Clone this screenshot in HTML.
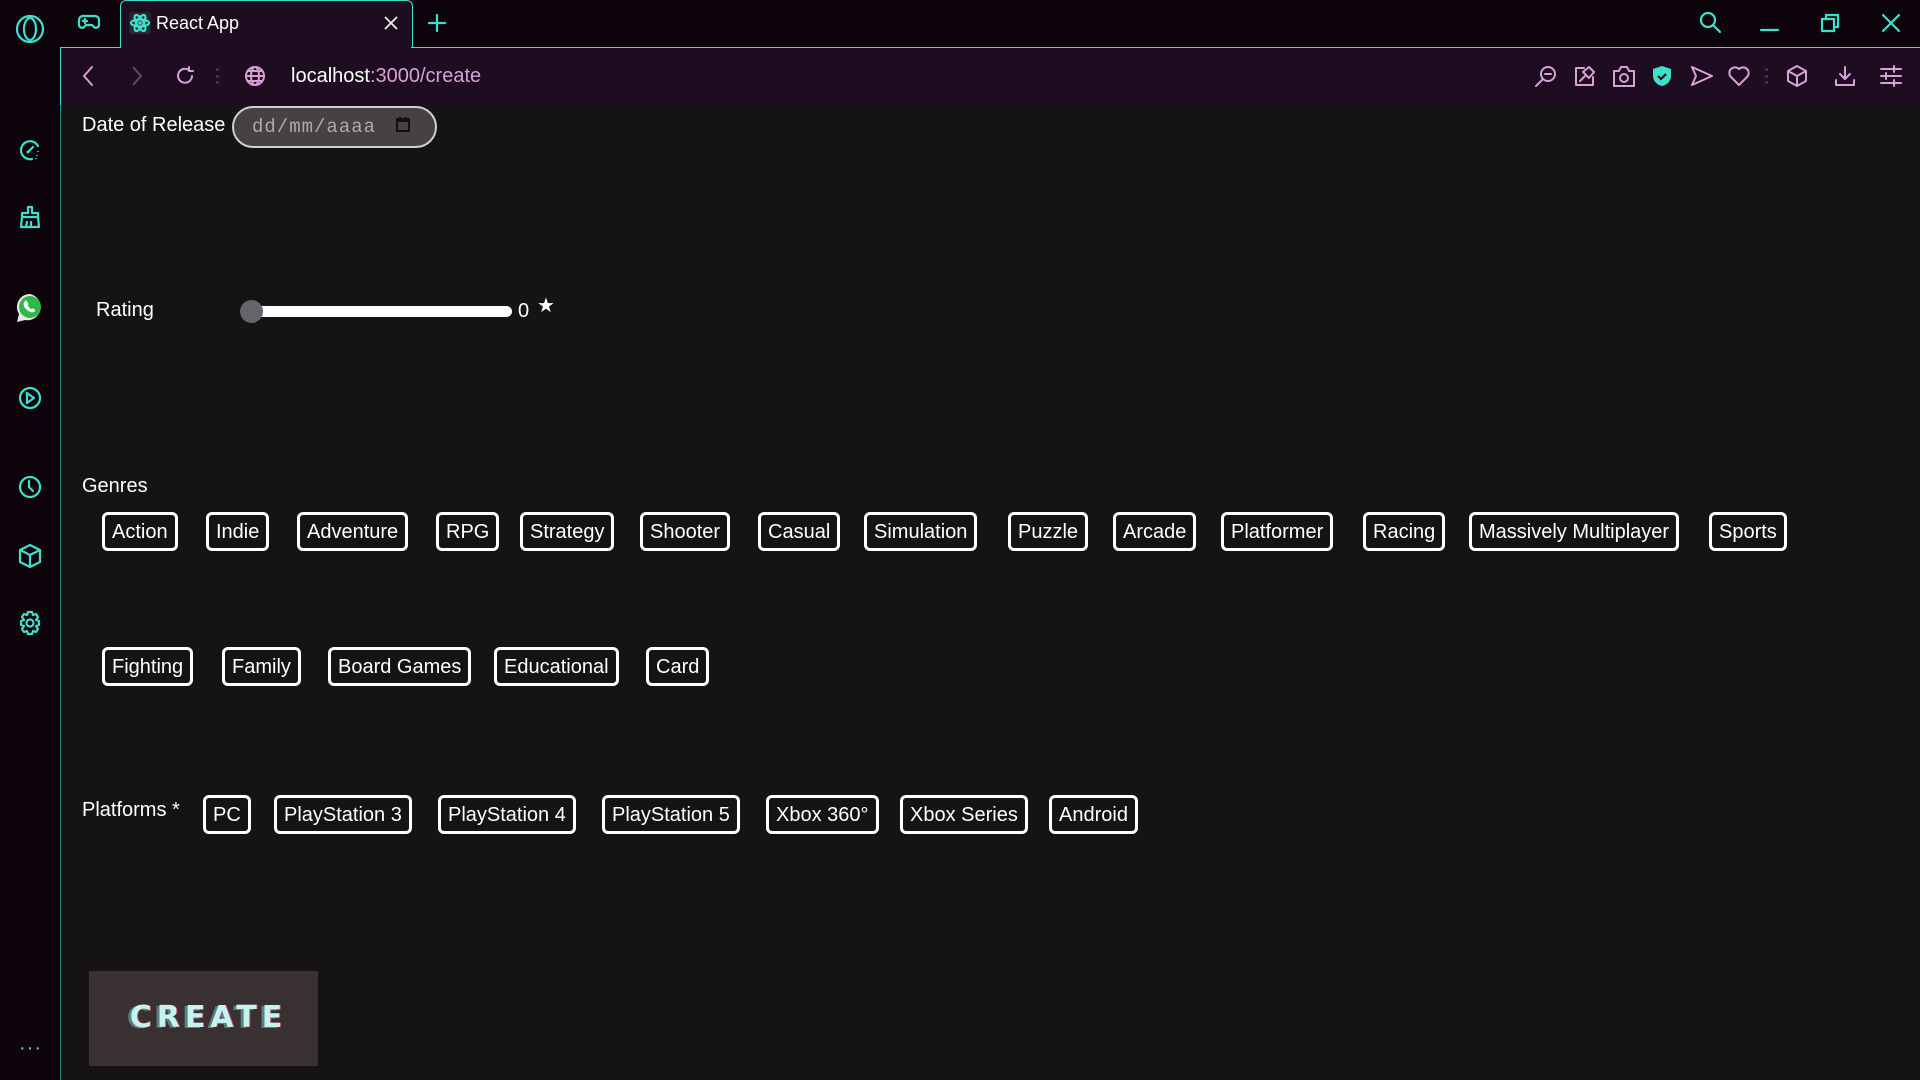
<!DOCTYPE html>
<html><head><meta charset="utf-8"><style>
*{box-sizing:border-box;margin:0;padding:0}
body{width:1920px;height:1080px;overflow:hidden;background:#0e050c;font-family:"Liberation Sans",sans-serif;position:relative;color:#fff}
.abs{position:absolute}
svg{position:absolute;overflow:visible}
.cy{stroke:#3ee0cc;fill:none;stroke-width:2.2;stroke-linecap:round;stroke-linejoin:round}
.pk{stroke:#d9a0d6;fill:none;stroke-width:2;stroke-linecap:round;stroke-linejoin:round}
.chip{position:absolute;height:39px;border:3px solid #fff;border-radius:6px;font-size:20px;line-height:35px;padding:0 7px;white-space:nowrap;color:#fff;background:#151314}
.lbl{position:absolute;font-size:20px;color:#fff}
</style></head><body>
<div class="abs" style="left:120px;top:0;width:293px;height:48px;background:#1e0d20;border:1.5px solid #3ee0cc;border-bottom:none;border-radius:6px 6px 0 0"></div>
<div class="abs" style="left:60px;top:47px;width:1860px;height:58px;background:#1e0d20;border-top:1.5px solid #3ee0cc;border-left:1.5px solid #3ee0cc"></div>
<div class="abs" style="left:121px;top:46px;width:290px;height:4px;background:#1e0d20"></div>
<div class="abs" style="left:60px;top:105px;width:1860px;height:975px;background:#151314;border-left:1.5px solid #1f8a80"></div>

<svg style="left:15px;top:14px" width="30" height="30"><ellipse class="cy" cx="15" cy="15" rx="13" ry="13"/><ellipse class="cy" cx="15" cy="15" rx="6" ry="11"/></svg>
<svg style="left:78px;top:14px" width="22" height="16"><path class="cy" d="M5 2h12a4 4 0 0 1 4 4v5a3 3 0 0 1-5 2l-2-2H8l-2 2a3 3 0 0 1-5-2V6a4 4 0 0 1 4-4z"/><path class="cy" d="M5 7h4M7 5v4" stroke-width="1.6"/></svg>
<div class="abs" style="left:129px;top:12px;width:22px;height:22px;background:#2a2430;border-radius:3px"></div>
<svg style="left:130px;top:13px" width="20" height="20"><g class="cy" stroke="#61c8e0" stroke-width="1.2"><ellipse cx="10" cy="10" rx="9" ry="3.5"/><ellipse cx="10" cy="10" rx="9" ry="3.5" transform="rotate(60 10 10)"/><ellipse cx="10" cy="10" rx="9" ry="3.5" transform="rotate(-60 10 10)"/></g><circle cx="10" cy="10" r="1.8" fill="#61c8e0"/></svg>
<div class="abs" style="left:156px;top:13px;font-size:18px;color:#fff">React App</div>
<svg style="left:384px;top:16px" width="14" height="14"><path d="M1 1l12 12M13 1L1 13" stroke="#eee" stroke-width="1.8"/></svg>
<svg style="left:428px;top:14px" width="18" height="18"><path class="cy" d="M9 1v16M1 9h16"/></svg>
<svg style="left:1699px;top:11px" width="24" height="24"><circle class="cy" cx="9" cy="9" r="7"/><path class="cy" d="M14 14l7 7"/></svg>
<svg style="left:1761px;top:28px" width="18" height="4"><path class="cy" d="M0 2h17"/></svg>
<svg style="left:1821px;top:14px" width="18" height="18"><rect class="cy" x="1" y="5" width="12" height="12"/><path class="cy" d="M5 5V1h12v12h-4"/></svg>
<svg style="left:1882px;top:14px" width="18" height="18"><path class="cy" d="M1 1l16 16M17 1L1 17"/></svg>

<svg style="left:82px;top:66px" width="12" height="20"><path class="pk" d="M10 1L2 10l8 9"/></svg>
<svg style="left:131px;top:66px" width="12" height="20"><path d="M2 1l8 9-8 9" stroke="#6a4468" stroke-width="2" fill="none"/></svg>
<svg style="left:175px;top:66px" width="20" height="20"><path class="pk" d="M17 10a7 7 0 1 1-3-6M14 1v4h4" stroke-width="2.4"/></svg>
<div class="abs" style="left:216px;top:68px;width:3px;height:16px;border-left:3px dotted #4a2c48"></div>
<svg style="left:244px;top:65px" width="22" height="22"><circle class="pk" cx="11" cy="11" r="9" stroke-width="2.4"/><ellipse class="pk" cx="11" cy="11" rx="4" ry="9" stroke-width="2"/><path class="pk" d="M2 11h18M4 6h14M4 16h14" stroke-width="1.8"/></svg>
<div class="abs" style="left:291px;top:65px;font-size:20px;color:#fff">localhost<span style="color:#d9a0d6">:3000/create</span></div>
<svg style="left:1535px;top:65px" width="22" height="22"><circle class="pk" cx="13" cy="9" r="7"/><path class="pk" d="M10 9h6M8 14l-7 7"/></svg>
<svg style="left:1574px;top:65px" width="22" height="22"><path class="pk" d="M10 3H2v17h17v-8"/><path class="pk" d="M6 16l5-5M9 7l6-5 5 5-5 6z"/></svg>
<svg style="left:1612px;top:65px" width="24" height="22"><path class="pk" d="M2 6h5l2-4h6l2 4h5v15H2z"/><circle class="pk" cx="12" cy="13" r="4"/></svg>
<svg style="left:1652px;top:65px" width="20" height="22"><path d="M10 1l9 3v7c0 5-4 9-9 10-5-1-9-5-9-10V4z" fill="#3ee0cc"/><path d="M6 11l3 3 5-5" stroke="#1e0d20" stroke-width="2.2" fill="none"/></svg>
<svg style="left:1691px;top:66px" width="22" height="20"><path class="pk" d="M1 1l20 9-20 9 4-9z"/></svg>
<svg style="left:1728px;top:66px" width="22" height="20"><path class="pk" d="M11 19L3 11a5 5 0 0 1 8-8 5 5 0 0 1 8 8z"/></svg>
<div class="abs" style="left:1765px;top:68px;width:3px;height:16px;border-left:3px dotted #4a2c48"></div>
<svg style="left:1786px;top:65px" width="22" height="22"><path class="pk" d="M11 1l9 5v10l-9 5-9-5V6zM2 6l9 5 9-5M11 11v10"/></svg>
<svg style="left:1834px;top:65px" width="22" height="22"><path class="pk" d="M11 2v12M6 9l5 5 5-5M2 15v5h18v-5"/></svg>
<svg style="left:1880px;top:66px" width="22" height="20"><path class="pk" d="M1 3h20M1 10h20M1 17h20M14 0v6M6 7v6M14 14v6"/></svg>

<svg style="left:19px;top:139px" width="22" height="22"><path class="cy" d="M19 7A9 9 0 1 0 13 20"/><path class="cy" d="M9 13l5-5"/><circle cx="9" cy="13" r="1.5" fill="#3ee0cc"/><path d="M19 12v1M18 16v1M17 19v1" stroke="#3ee0cc" stroke-width="1.6"/></svg>
<svg style="left:19px;top:206px" width="22" height="22"><path class="cy" d="M9 1h4v6h6v4H3V7h6zM3 11l-1 10h18l-1-10M7 21l1-5M12 21v-5"/></svg>
<svg style="left:14px;top:292px" width="32" height="32"><path d="M16 2a13 13 0 0 0-11 20l-2 8 8-2A13 13 0 1 0 16 2z" fill="#e8e8e8"/><circle cx="16" cy="15" r="11" fill="#2fb74a"/><path d="M11 9c1-1 2 0 3 2s-1 2 0 3 2 3 3 3 2-1 3 0 2 2 0 3-5 0-8-3-3-6-1-8z" fill="#fff"/></svg>
<svg style="left:18px;top:386px" width="24" height="24"><circle class="cy" cx="12" cy="12" r="10"/><path class="cy" d="M9 7l7 5-7 5z"/></svg>
<svg style="left:18px;top:475px" width="24" height="24"><circle class="cy" cx="12" cy="12" r="10"/><path class="cy" d="M11 6v6l4 4"/></svg>
<svg style="left:19px;top:544px" width="22" height="24"><path class="cy" d="M11 1l10 5v12l-10 5-10-5V6zM1 6l10 5 10-5M11 11v12"/></svg>
<svg style="left:18px;top:611px" width="24" height="24"><circle class="cy" cx="12" cy="12" r="3.5"/><path class="cy" d="M10 1h4l1 3 3-1 2 3-2 3 3 1v4l-3 1 2 3-2 3-3-1-1 3h-4l-1-3-3 1-2-3 2-3-3-1v-4l3-1-2-3 2-3 3 1z"/></svg>
<div class="abs" style="left:19px;top:1037px;font-size:20px;color:#3ee0cc;letter-spacing:1px">···</div>

<div class="lbl" style="left:82px;top:114px">Date of Release</div>
<div class="abs" style="left:232px;top:106px;width:205px;height:42px;background:#474141;border:2px solid #d0d0d0;border-radius:21px"></div>
<div class="abs" style="left:252px;top:116px;font-family:'Liberation Mono',monospace;font-size:19px;color:#b0aaa8;letter-spacing:1px">dd/mm/aaaa</div>
<svg style="left:396px;top:116px" width="14" height="16"><rect x="1" y="3" width="12" height="12" fill="none" stroke="#111" stroke-width="2"/><path d="M1 5h12M4 1v3M10 1v3" stroke="#111" stroke-width="2"/></svg>

<div class="lbl" style="left:96px;top:299px">Rating</div>
<div class="abs" style="left:250px;top:306px;width:262px;height:11px;background:#fff;border-radius:6px"></div>
<div class="abs" style="left:240px;top:300px;width:23px;height:23px;background:#67636b;border-radius:50%"></div>
<div class="lbl" style="left:518px;top:300px">0</div>
<div class="abs" style="left:537px;top:293px;font-size:20px;color:#fff">★</div>

<div class="lbl" style="left:82px;top:475px">Genres</div>
<div class="chip" style="left:102px;top:512px">Action</div>
<div class="chip" style="left:206px;top:512px">Indie</div>
<div class="chip" style="left:297px;top:512px">Adventure</div>
<div class="chip" style="left:436px;top:512px">RPG</div>
<div class="chip" style="left:520px;top:512px">Strategy</div>
<div class="chip" style="left:640px;top:512px">Shooter</div>
<div class="chip" style="left:758px;top:512px">Casual</div>
<div class="chip" style="left:864px;top:512px">Simulation</div>
<div class="chip" style="left:1008px;top:512px">Puzzle</div>
<div class="chip" style="left:1113px;top:512px">Arcade</div>
<div class="chip" style="left:1221px;top:512px">Platformer</div>
<div class="chip" style="left:1363px;top:512px">Racing</div>
<div class="chip" style="left:1469px;top:512px">Massively Multiplayer</div>
<div class="chip" style="left:1709px;top:512px">Sports</div>

<div class="chip" style="left:102px;top:647px">Fighting</div>
<div class="chip" style="left:222px;top:647px">Family</div>
<div class="chip" style="left:328px;top:647px">Board Games</div>
<div class="chip" style="left:494px;top:647px">Educational</div>
<div class="chip" style="left:646px;top:647px">Card</div>

<div class="lbl" style="left:82px;top:799px">Platforms *</div>
<div class="chip" style="left:203px;top:795px">PC</div>
<div class="chip" style="left:274px;top:795px">PlayStation 3</div>
<div class="chip" style="left:438px;top:795px">PlayStation 4</div>
<div class="chip" style="left:602px;top:795px">PlayStation 5</div>
<div class="chip" style="left:766px;top:795px">Xbox 360°</div>
<div class="chip" style="left:900px;top:795px">Xbox Series</div>
<div class="chip" style="left:1049px;top:795px">Android</div>

<div class="abs" style="left:89px;top:971px;width:229px;height:95px;background:#393031"></div>
<div class="abs" style="left:94px;top:1000px;width:229px;text-align:center;font-family:'DejaVu Sans','Liberation Sans',sans-serif;font-weight:900;font-size:30px;letter-spacing:5px;color:#c4f4f0;text-shadow:-3px 1px 0 #5a7f80,1px 0 0 #d04060">CREATE</div>
</body></html>
